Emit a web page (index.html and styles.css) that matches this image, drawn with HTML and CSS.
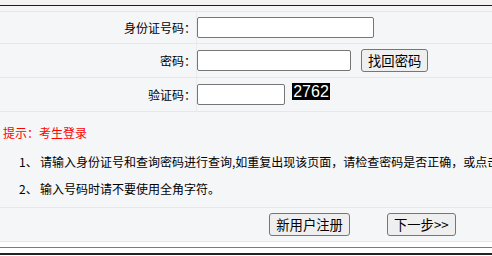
FILE: index.html
```html
<!DOCTYPE html>
<html lang="zh-CN">
<head>
<meta charset="utf-8">
<title>考生登录</title>
<link rel="stylesheet" href="styles.css">
</head>
<body>
<div class="page">
  <div class="top-space"></div>
  <div class="rule-dark"></div>
  <div class="top-gap"></div>
  <div class="panel">
    <div class="row row-first">
      <div class="label">身份证号码：</div>
      <div class="field"><input class="inp inp-id" type="text"></div>
    </div>
    <div class="row">
      <div class="label">密码：</div>
      <div class="field"><input class="inp inp-pwd" type="password"><button class="btn" type="button">找回密码</button></div>
    </div>
    <div class="row">
      <div class="label">验证码：</div>
      <div class="field field-code"><input class="inp inp-code" type="text"><span class="captcha">2762</span></div>
    </div>
    <div class="hint">
      <div class="hint-title">提示：考生登录</div>
      <div class="hint-line"><span class="num">1、</span>请输入身份证号和查询密码进行查询,如重复出现该页面，请检查密码是否正确，或点击此处找回密码。</div>
      <div class="hint-line"><span class="num">2、</span>输入号码时请不要使用全角字符。</div>
    </div>
    <div class="actions">
      <button class="btn" type="button">新用户注册</button>
      <button class="btn" type="button">下一步&gt;&gt;</button>
    </div>
  </div>
  <div class="bottom-gap"></div>
  <div class="rule-gray"></div>
  <div class="bottom-gap"></div>
  <div class="rule-bottom"></div>
</div>
</body>
</html>
```
FILE: styles.css
```css
html, body {
  margin: 0;
  padding: 0;
  background: #ffffff;
  overflow: hidden;
}
body {
  font-family: "Noto Sans CJK SC", "Noto Sans", sans-serif;
  font-size: 12px;
  color: #000;
}
.page {
  width: 492px;
  overflow: hidden;
}
.top-space {
  height: 5px;
  background: #f3f3f3;
}
.rule-dark {
  height: 1px;
  background: #1e1e1e;
}
.top-gap {
  height: 5px;
  background: #f5f5f6;
}
.panel {
  width: 725px;
  background: #f5f6f8;
  border-top: 1px solid #e6e7e9;
  border-bottom: 1px solid #e6e7e9;
}
.row {
  display: flex;
  height: 33px;
  border-bottom: 1px solid #e6e7e9;
}
.row-first {
  height: 31px;
}
.label {
  width: 196px;
  flex: none;
  border-right: 1px solid #eaebed;
  display: flex;
  align-items: center;
  justify-content: flex-end;
  white-space: nowrap;
  line-height: 17px;
}
.field {
  display: flex;
  align-items: center;
  gap: 10px;
}
.field-code {
  gap: 7px;
}
.inp {
  box-sizing: border-box;
  height: 21px;
  margin: 0;
  padding: 1px 3px;
  border: 1px solid #767676;
  border-radius: 2px;
  background: #fff;
  font: inherit;
}
.inp-id { width: 177px; }
.inp-pwd { width: 154px; }
.inp-code { width: 88px; }
.captcha {
  display: inline-block;
  background: #000;
  color: #fff;
  font-family: "Liberation Sans", Arial, sans-serif;
  font-size: 16px;
  height: 17px;
  line-height: 17px;
  padding: 0 1px;
  width: 36px;
  text-align: center;
  margin-bottom: 7px;
}
.btn {
  box-sizing: border-box;
  height: 23px;
  margin: 0;
  padding: 0 6px;
  border: 1px solid #767676;
  border-radius: 3px;
  background: #efefef;
  color: #000;
  font-family: "Noto Sans CJK SC", "Noto Sans", sans-serif;
  font-size: 13.33px;
  line-height: 21px;
  white-space: nowrap;
}
.hint {
  height: 96px;
  box-sizing: border-box;
  padding: 12px 0 0 3px;
  border-bottom: 1px solid #e6e7e9;
  white-space: nowrap;
  line-height: 18px;
}
.hint-title {
  color: #ff0000;
}
.hint-line {
  padding-left: 16px;
  margin-top: 11px;
}
.hint-line + .hint-line {
  margin-top: 9px;
}
.num {
  display: inline-block;
  width: 21px;
}
.actions {
  height: 33px;
  display: flex;
  align-items: center;
  justify-content: center;
  gap: 37px;
}
.bottom-gap {
  height: 5px;
  background: #fff;
}
.rule-gray {
  height: 1px;
  background: #7b7b7b;
}
.rule-bottom {
  height: 2px;
  background: #222;
}
```
